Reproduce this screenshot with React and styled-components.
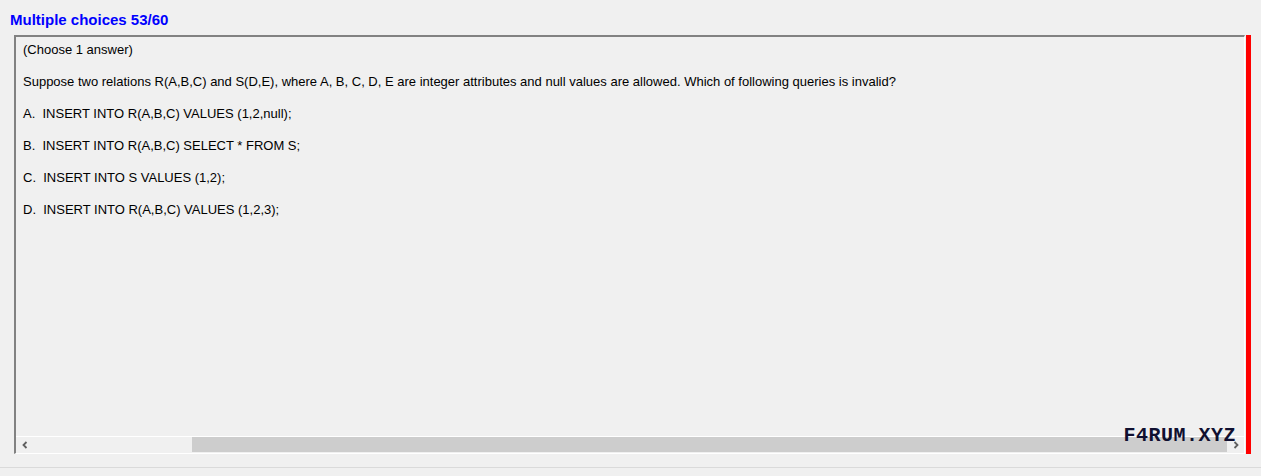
import React from "react";
import styled, { createGlobalStyle } from "styled-components";

const GlobalStyle = createGlobalStyle`
  html, body {
    margin: 0;
    padding: 0;
    background: #f0f0f0;
  }
  body {
    font-family: "Liberation Sans", Arial, sans-serif;
  }
`;

const Page = styled.div`
  width: 1261px;
  height: 476px;
  background: #f0f0f0;
  display: flex;
  flex-direction: column;
  overflow: hidden;
`;

const Title = styled.div`
  height: 35px;
  box-sizing: border-box;
  padding: 11px 0 0 10px;
  font-size: 15px;
  font-weight: bold;
  color: #0000ff;
  line-height: 18px;
`;

const Row = styled.div`
  display: flex;
  padding-left: 14px;
  height: 419px;
`;

const Panel = styled.div`
  position: relative;
  width: 1231px;
  box-sizing: border-box;
  border-top: 2px solid #828282;
  border-left: 2px solid #828282;
  border-right: 1px solid #ffffff;
  border-bottom: 1px solid #ffffff;
  display: flex;
  flex-direction: column;
`;

const Content = styled.div`
  flex: 1;
  padding: 5px 7px;
  display: flex;
  flex-direction: column;
  gap: 16px;
`;

const Line = styled.div`
  font-size: 13px;
  line-height: 16px;
  color: #000;
  white-space: pre;
`;

const ScrollBar = styled.div`
  height: 17px;
  border-top: 1px solid #ffffff;
  box-sizing: border-box;
  display: flex;
  align-items: stretch;
  background: #f0f0f0;
`;

const Arrow = styled.div`
  width: 17px;
  display: flex;
  align-items: center;
  justify-content: center;
`;

const Track = styled.div`
  flex: 1;
  padding: 0 0 1px 0;
  display: flex;
`;

const Thumb = styled.div`
  margin-left: ${(p) => p.$offset}px;
  flex: 1;
  background: #cdcdcd;
`;

const RedBar = styled.div`
  width: 5px;
  margin-left: 1px;
  background: #ff0000;
`;

const Watermark = styled.div`
  position: absolute;
  right: 8px;
  bottom: 6px;
  font-family: "Liberation Mono", "DejaVu Sans Mono", monospace;
  font-size: 20px;
  font-weight: bold;
  color: #101030;
  letter-spacing: 0.5px;
`;

const Footer = styled.div`
  margin-top: 13px;
  border-top: 1px solid #dadada;
  flex: 1;
`;

const ArrowIcon = ({ dir }) => (
  <svg width="8" height="8" viewBox="0 0 8 8">
    <path
      d={dir === "left" ? "M5.5 1 L2.5 4 L5.5 7" : "M2.5 1 L5.5 4 L2.5 7"}
      fill="none"
      stroke="#606060"
      strokeWidth="1.8"
    />
  </svg>
);

const lines = [
  "(Choose 1 answer)",
  "Suppose two relations R(A,B,C) and S(D,E), where A, B, C, D, E are integer attributes and null values are allowed. Which of following queries is invalid?",
  "A.  INSERT INTO R(A,B,C) VALUES (1,2,null);",
  "B.  INSERT INTO R(A,B,C) SELECT * FROM S;",
  "C.  INSERT INTO S VALUES (1,2);",
  "D.  INSERT INTO R(A,B,C) VALUES (1,2,3);",
];

export default function App() {
  return (
    <Page>
      <GlobalStyle />
      <Title>Multiple choices 53/60</Title>
      <Row>
        <Panel>
          <Content>
            {lines.map((t, i) => (
              <Line key={i}>{t}</Line>
            ))}
          </Content>
          <ScrollBar>
            <Arrow>
              <ArrowIcon dir="left" />
            </Arrow>
            <Track>
              <Thumb $offset={159} />
            </Track>
            <Arrow>
              <ArrowIcon dir="right" />
            </Arrow>
          </ScrollBar>
          <Watermark>F4RUM.XYZ</Watermark>
        </Panel>
        <RedBar />
      </Row>
      <Footer />
    </Page>
  );
}
